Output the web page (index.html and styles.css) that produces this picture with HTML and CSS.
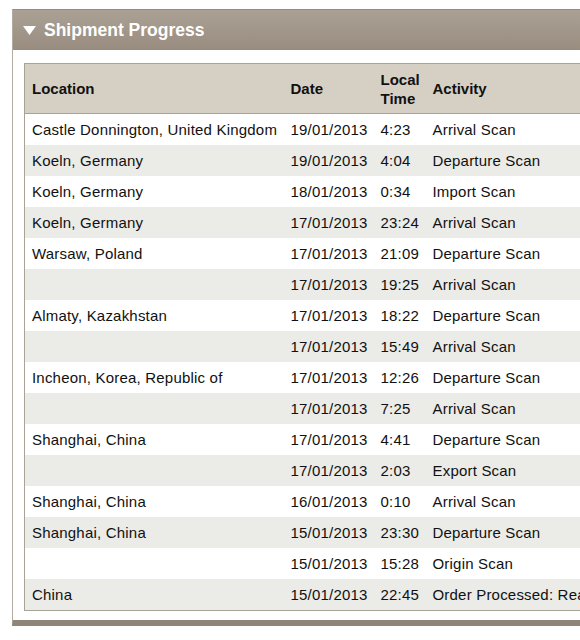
FILE: index.html
```html
<!DOCTYPE html>
<html>
<head>
<meta charset="utf-8">
<link rel="stylesheet" href="styles.css">
</head>
<body>
<div class="panel">
  <div class="panel-head">
    <svg class="caret" width="13" height="9" viewBox="0 0 13 9"><polygon points="0,0 13,0 6.5,9" fill="#fff"/></svg>
    <span>Shipment Progress</span>
  </div>
  <div class="panel-body">
    <table class="progress">
      <colgroup>
        <col class="c-loc"><col class="c-date"><col class="c-time"><col class="c-act">
      </colgroup>
      <thead>
        <tr><th>Location</th><th>Date</th><th>Local<br>Time</th><th>Activity</th></tr>
      </thead>
      <tbody>
        <tr><td>Castle Donnington, United Kingdom</td><td>19/01/2013</td><td>4:23</td><td>Arrival Scan</td></tr>
        <tr><td>Koeln, Germany</td><td>19/01/2013</td><td>4:04</td><td>Departure Scan</td></tr>
        <tr><td>Koeln, Germany</td><td>18/01/2013</td><td>0:34</td><td>Import Scan</td></tr>
        <tr><td>Koeln, Germany</td><td>17/01/2013</td><td>23:24</td><td>Arrival Scan</td></tr>
        <tr><td>Warsaw, Poland</td><td>17/01/2013</td><td>21:09</td><td>Departure Scan</td></tr>
        <tr><td></td><td>17/01/2013</td><td>19:25</td><td>Arrival Scan</td></tr>
        <tr><td>Almaty, Kazakhstan</td><td>17/01/2013</td><td>18:22</td><td>Departure Scan</td></tr>
        <tr><td></td><td>17/01/2013</td><td>15:49</td><td>Arrival Scan</td></tr>
        <tr><td>Incheon, Korea, Republic of</td><td>17/01/2013</td><td>12:26</td><td>Departure Scan</td></tr>
        <tr><td></td><td>17/01/2013</td><td>7:25</td><td>Arrival Scan</td></tr>
        <tr><td>Shanghai, China</td><td>17/01/2013</td><td>4:41</td><td>Departure Scan</td></tr>
        <tr><td></td><td>17/01/2013</td><td>2:03</td><td>Export Scan</td></tr>
        <tr><td>Shanghai, China</td><td>16/01/2013</td><td>0:10</td><td>Arrival Scan</td></tr>
        <tr><td>Shanghai, China</td><td>15/01/2013</td><td>23:30</td><td>Departure Scan</td></tr>
        <tr><td></td><td>15/01/2013</td><td>15:28</td><td>Origin Scan</td></tr>
        <tr><td>China</td><td>15/01/2013</td><td>22:45</td><td>Order Processed: Ready for UPS</td></tr>
      </tbody>
    </table>
  </div>
</div>
</body>
</html>
```

FILE: styles.css
```css
html, body {
  margin: 0;
  padding: 0;
  background: #fff;
  overflow: hidden;
  font-family: "Liberation Sans", Arial, Helvetica, sans-serif;
  color: #111;
}

.panel {
  margin: 9px 0 0 12px;
  width: 660px;
  border-left: 1px solid #b3ab9f;
  border-bottom: 6px solid #8f8578;
  box-shadow: inset 0 -1px 0 #d8d3cb;
}

.panel-head {
  height: 40px;
  border-top: 1px solid #958c7f;
  background: linear-gradient(#aaa194, #988d7f);
  display: flex;
  align-items: center;
  padding-left: 10px;
  gap: 8px;
  color: #fff;
  font-weight: bold;
  font-size: 17.5px;
}

.caret {
  display: block;
  margin-top: 1px;
}

.panel-body {
  padding: 13px 0 9px 11px;
  background: #fff;
}

.progress {
  border-collapse: collapse;
  table-layout: fixed;
  width: 641px;
  font-size: 15px;
  border-left: 1px solid #aaa395;
  border-top: 1px solid #aaa395;
  border-bottom: 1px solid #aaa395;
}

.c-loc { width: 259px; }
.c-date { width: 90px; }
.c-time { width: 52px; }
.c-act { width: 240px; }

.progress th {
  background: #d6d0c4;
  text-align: left;
  font-weight: bold;
  font-size: 15px;
  line-height: 19px;
  height: 49px;
  padding: 0 7px;
  border-bottom: 1px solid #aaa395;
  white-space: nowrap;
}

.progress td {
  height: 31px;
  padding: 0 7px;
  line-height: 18px;
  letter-spacing: 0.2px;
  white-space: nowrap;
  overflow: hidden;
}

.progress tbody tr:nth-child(even) td {
  background: #ebebe7;
}
```
